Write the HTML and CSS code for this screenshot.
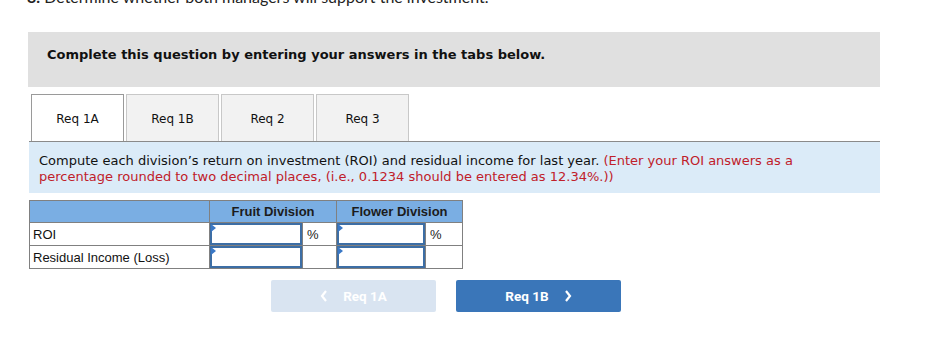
FILE: index.html
```html
<!DOCTYPE html>
<html lang="en">
<head>
    <meta charset="UTF-8">
    <meta name="viewport" content="width=device-width, initial-scale=1.0">
    <title>Req 1A - ROI and Residual Income</title>
    <link rel="stylesheet" href="styles.css">
</head>
<body>

<div class="page">
    <p class="question"><b>3.</b> Determine whether both managers will support the investment.</p>

    <div class="banner">
        <p>Complete this question by entering your answers in the tabs below.</p>
    </div>

    <div class="tab-area">
        <ul class="tabs">
            <li class="tab active">Req 1A</li>
            <li class="tab">Req 1B</li>
            <li class="tab">Req 2</li>
            <li class="tab">Req 3</li>
        </ul>

        <div class="instructions">
            Compute each division&rsquo;s return on investment (ROI) and residual income for last year.
            <span class="hint">(Enter your ROI answers as a percentage rounded to two decimal places, (i.e., 0.1234 should be entered as 12.34%.))</span>
        </div>

        <table class="answers">
            <colgroup>
                <col class="c-label">
                <col class="c-input">
                <col class="c-unit">
                <col class="c-input2">
                <col class="c-unit2">
            </colgroup>
            <thead>
                <tr>
                    <th></th>
                    <th colspan="2">Fruit Division</th>
                    <th colspan="2">Flower Division</th>
                </tr>
            </thead>
            <tbody>
                <tr>
                    <td class="label">ROI</td>
                    <td class="entry"><span class="box"></span></td>
                    <td class="unit">%</td>
                    <td class="entry"><span class="box"></span></td>
                    <td class="unit">%</td>
                </tr>
                <tr>
                    <td class="label">Residual Income (Loss)</td>
                    <td class="entry"><span class="box"></span></td>
                    <td class="unit"></td>
                    <td class="entry"><span class="box"></span></td>
                    <td class="unit"></td>
                </tr>
            </tbody>
        </table>

        <div class="nav-buttons">
            <button class="nav-btn prev">
                <svg width="8" height="12" viewBox="0 0 8 12"><path d="M6 1 L2 6 L6 11" fill="none" stroke="#fff" stroke-width="2.2"/></svg>
                Req 1A
            </button>
            <button class="nav-btn next">
                Req 1B
                <svg width="8" height="12" viewBox="0 0 8 12"><path d="M2 1 L6 6 L2 11" fill="none" stroke="#fff" stroke-width="2.2"/></svg>
            </button>
        </div>
    </div>
</div>

</body>
</html>
```

FILE: styles.css
```css
body {
    margin: 0;
    background: #fff;
    color: #111;
}

.page {
    width: 852px;
    margin-left: 28px;
}

/* question heading, scrolled mostly off the top */
.question {
    margin: -13px 0 0 -1px;
    font-family: Lato, "Open Sans", sans-serif;
    font-size: 16px;
    line-height: 20px;
    color: #222;
}

.banner {
    margin-top: 25px;
    height: 55px;
    box-sizing: border-box;
    background: #e0e0e0;
    padding: 15px 0 0 19px;
}

.banner p {
    margin: 0;
    font-family: "DejaVu Sans", Verdana, sans-serif;
    font-weight: bold;
    font-size: 13px;
    line-height: 16px;
    color: #111;
}

.tab-area {
    margin-left: 1px;
    margin-top: 7px;
}

.tabs {
    list-style: none;
    margin: 0;
    padding: 0 0 0 2px;
    display: flex;
    gap: 2px;
    border-bottom: 1px solid #8a8a8a;
}

.tab {
    box-sizing: border-box;
    width: 93px;
    height: 47px;
    padding-top: 1px;
    border: 1px solid #c8c8c8;
    border-bottom: none;
    background: #f2f2f2;
    display: flex;
    align-items: center;
    justify-content: center;
    font-family: "DejaVu Sans", Verdana, sans-serif;
    font-size: 12px;
    color: #111;
}

.tab.active {
    background: #fff;
    border-color: #9a9a9a;
}

.instructions {
    background: #dbebf8;
    padding: 11px 70px 8px 10px;
    height: 32px;
    font-family: "DejaVu Sans", Verdana, sans-serif;
    font-size: 13px;
    line-height: 16px;
    color: #111;
}

.instructions .hint {
    color: #c0202a;
}

/* answer table */
.answers {
    margin-top: 7px;
    border-collapse: collapse;
    table-layout: fixed;
    width: 433px;
    font-family: "Liberation Sans", Arial, sans-serif;
    font-size: 13px;
}

.c-label { width: 180px; }
.c-input { width: 93px; }
.c-unit { width: 34px; }
.c-input2 { width: 89px; }
.c-unit2 { width: 37px; }

.answers th,
.answers td {
    border: 1px solid #808080;
    height: 21px;
    padding: 0;
}

.answers th {
    background: #7aaee3;
    font-weight: bold;
    color: #1c1c1c;
    text-align: center;
}

.answers td.label {
    padding-left: 3px;
    color: #111;
}

.answers td.unit {
    padding-left: 4px;
    color: #222;
}

.answers td.entry {
    position: relative;
}

.box {
    display: block;
    box-sizing: border-box;
    height: 22px;
    border: 2px solid #3d6ea5;
    background: #fff;
}

/* little marker in the corner of each input */
.entry::before {
    content: "";
    position: absolute;
    left: 1px;
    top: 1px;
    border-left: 5px solid #3a78c6;
    border-top: 4px solid transparent;
    border-bottom: 4px solid transparent;
}

.nav-buttons {
    margin: 11px 0 0 242px;
    display: flex;
    gap: 20px;
}

.nav-btn {
    width: 165px;
    height: 32px;
    border: none;
    border-radius: 2px;
    color: #fff;
    font-family: Roboto, "Liberation Sans", Arial, sans-serif;
    font-weight: bold;
    font-size: 13.5px;
    display: flex;
    align-items: center;
    justify-content: center;
    gap: 15px;
    padding: 0;
}

.nav-btn.prev {
    background: #d9e4f1;
}

.nav-btn.next {
    background: #3a76b9;
}
```
